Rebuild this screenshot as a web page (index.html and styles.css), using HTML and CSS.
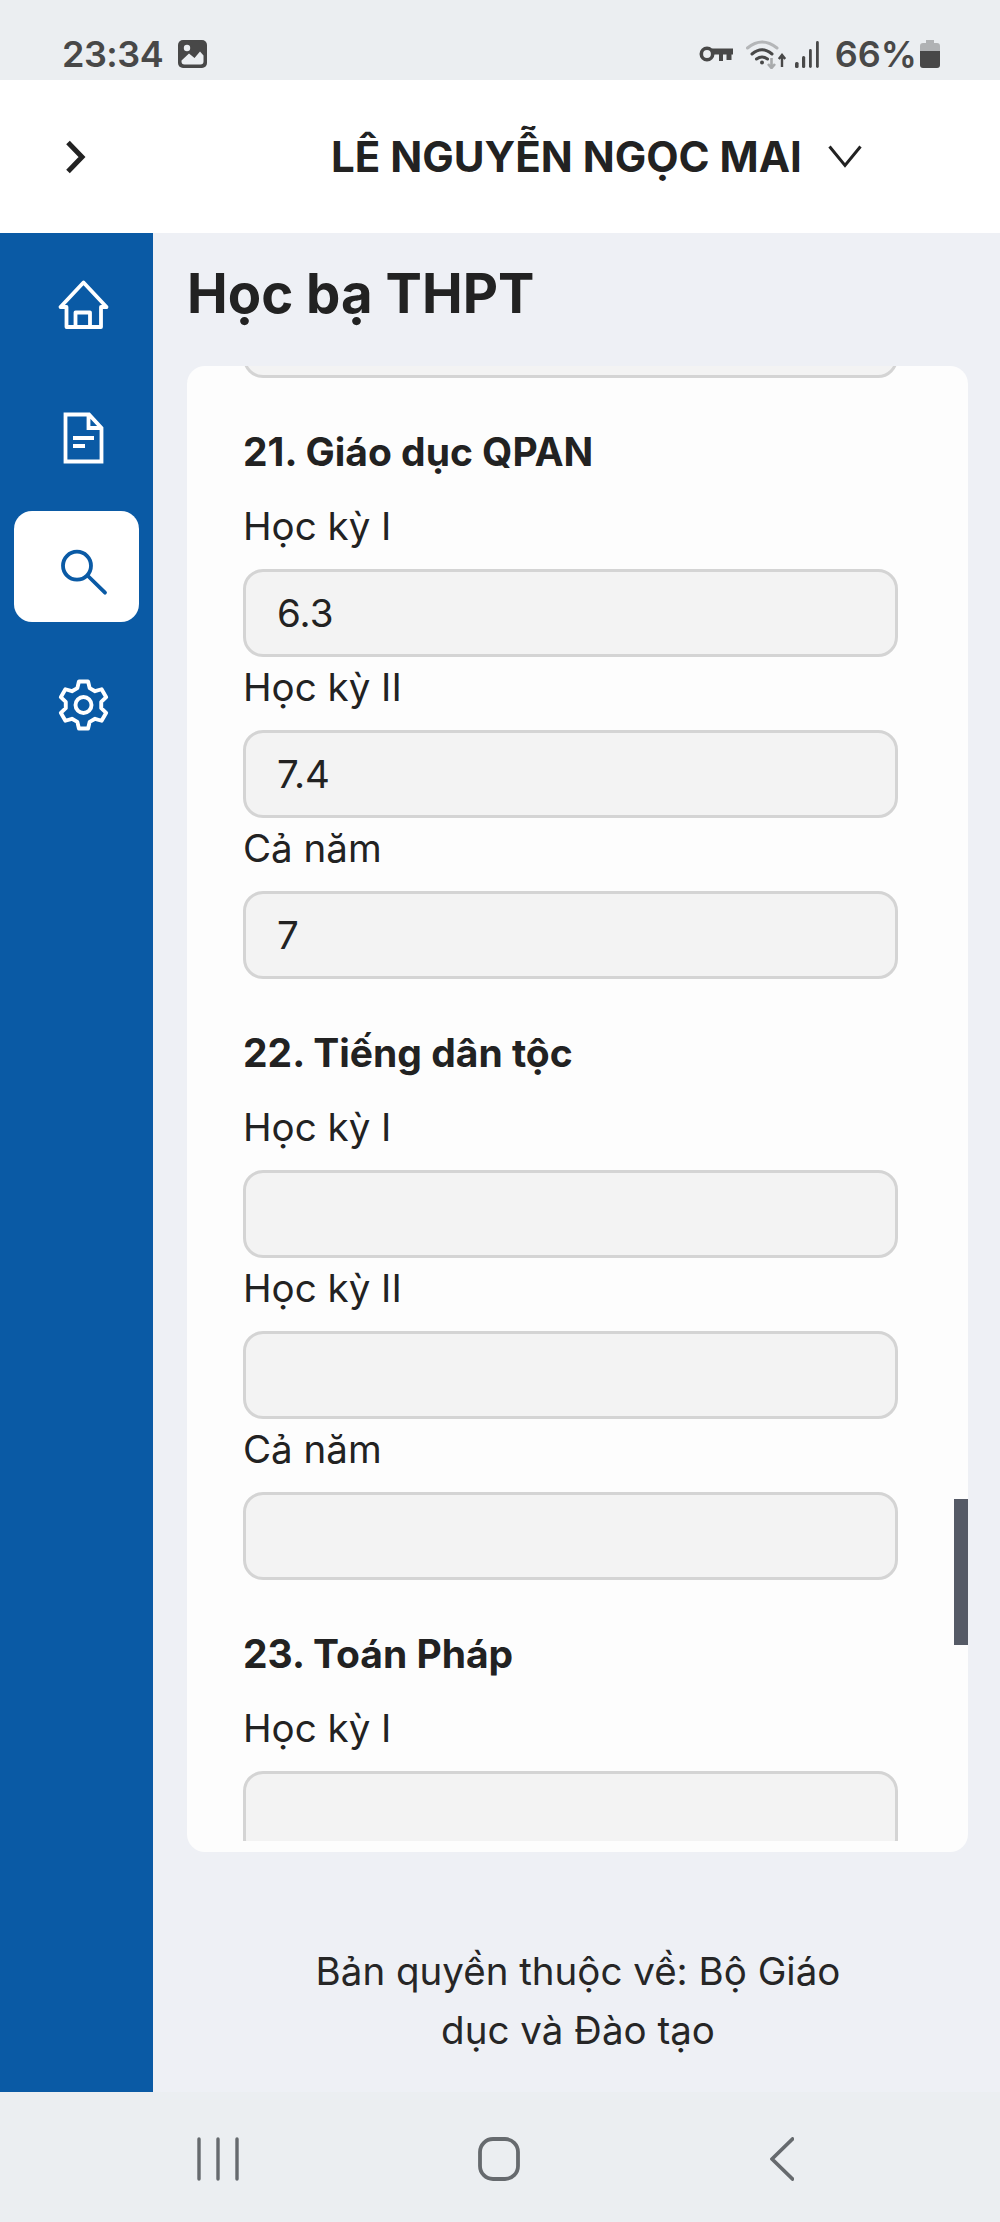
FILE: index.html
```html
<!DOCTYPE html>
<html lang="vi">
<head>
<meta charset="utf-8">
<title>Học bạ THPT</title>
<link rel="stylesheet" href="styles.css">
</head>
<body>
<div class="phone">
  <div class="statusbar">
    <div class="status-left">
      <span class="clock">23:34</span>
      <svg class="ic-image" viewBox="0 0 29 28"><rect width="29" height="28" rx="5" fill="#484848"/><circle cx="9" cy="8" r="3.2" fill="#ebeef1"/><path d="M3.5 20.5 L11 13.5 L16.5 18 L22 11.5 L25.5 15.5 V21.5 Q25.5 24.5 22.5 24.5 H6.5 Q3.5 24.5 3.5 21.5Z" fill="#ebeef1"/></svg>
    </div>
    <div class="status-right">
      <svg class="ic-key" viewBox="0 0 34 16"><circle cx="8" cy="8" r="5.7" fill="none" stroke="#484848" stroke-width="3.6"/><path d="M13 2.5H34V8.5H13ZM20 8H24V15H20ZM27.500 8H32.500V14H27.500Z" fill="#484848"/></svg>
      <svg class="ic-wifi" viewBox="0 0 40 30"><g fill="none" stroke-width="3" stroke-linecap="round"><path d="M1.500 9 Q16 -3 31 9" stroke="#b4b6b8"/><path d="M6 15 Q16 6.500 26 15" stroke="#484848"/><path d="M10.500 20 Q16 16 21.500 20" stroke="#484848"/></g><circle cx="16" cy="23.500" r="2" fill="#484848"/><path d="M25.500 19V28M22 25L25.500 29L29 25" fill="none" stroke="#a8aaac" stroke-width="2.600"/><path d="M36 28V17M32.800 20L36 16L39.200 20" fill="none" stroke="#484848" stroke-width="2.400"/></svg>
      <svg class="ic-signal" viewBox="0 0 25 27"><g fill="#484848"><rect x="0" y="21" width="3.600" height="6" rx="1.500"/><rect x="7" y="15" width="3.200" height="12" rx="1.500"/><rect x="14" y="8" width="2.800" height="19" rx="1.400"/><rect x="21" y="0" width="2.800" height="27" rx="1.400"/></g></svg>
      <span class="percent">66%</span>
      <svg class="ic-battery" viewBox="0 0 20 28"><path d="M6 0H14V3H17Q20 3 20 6V12H0V6Q0 3 3 3H6Z" fill="#b0b2b4"/><path d="M0 11H20V25Q20 28 17 28H3Q0 28 0 25Z" fill="#484848"/></svg>
    </div>
  </div>

  <header class="topbar">
    <svg class="ic-toggle" viewBox="0 0 24 34"><path d="M4 2.500 L18 17 L4 31.500" fill="none" stroke="#222" stroke-width="5"/></svg>
    <span class="username">LÊ NGUYỄN NGỌC MAI</span>
    <svg class="ic-caret" viewBox="0 0 34 23"><path d="M1.500 1.500 L17 20.500 L32.500 1.500" fill="none" stroke="#222" stroke-width="3"/></svg>
  </header>

  <div class="main">
    <nav class="sidebar">
      <a class="nav-item">
        <svg class="nav-ic" viewBox="0 0 60 60"><path d="M13.500 36H7.500L30.500 11.500L53.500 36H48V56H13.500ZM22.500 56V41.500H37V56" fill="none" stroke="#fff" stroke-width="3.800" stroke-linejoin="round"/></svg>
      </a>
      <a class="nav-item">
        <svg class="nav-ic" viewBox="0 0 60 60"><path d="M12.500 10.500H36L48.500 24V57.500H12.500ZM35.500 10.500V24H48.500M20 34H41M20 42H32" fill="none" stroke="#fff" stroke-width="3.800"/></svg>
      </a>
      <a class="nav-item is-active">
        <svg class="nav-ic" viewBox="0 0 60 60"><circle cx="24" cy="28.700" r="14" fill="none" stroke="#0a5aa5" stroke-width="3.800"/><path d="M35 39L52 55.700" fill="none" stroke="#0a5aa5" stroke-width="3.800" stroke-linecap="round"/></svg>
      </a>
      <a class="nav-item">
        <svg class="nav-ic" viewBox="0 0 60 60"><g transform="translate(30.500 35)" fill="none" stroke="#fff" stroke-width="3.900" stroke-linejoin="round"><path d="M-6.160 -16.900L-4.580 -23.560L4.580 -23.560L6.160 -16.900L11.570 -13.790L18.110 -15.750L22.690 -7.810L17.730 -3.130V3.130L22.690 7.810L18.110 15.750L11.570 13.790L6.160 16.900L4.580 23.560H-4.580L-6.160 16.900L-11.570 13.790L-18.110 15.750L-22.690 7.810L-17.730 3.130V-3.130L-22.690 -7.810L-18.110 -15.750L-11.570 -13.790Z"/><circle r="8"/></g></svg>
      </a>
    </nav>

    <main class="content">
      <h1 class="page-title">Học bạ THPT</h1>
      <div class="card">
        <div class="scroll">
          <input class="field field-stub" readonly>

          <section class="subject">
            <h2 class="subject-title">21. Giáo dục QPAN</h2>
            <label class="field-label">Học kỳ I</label>
            <input class="field" value="6.3" readonly>
            <label class="field-label">Học kỳ II</label>
            <input class="field" value="7.4" readonly>
            <label class="field-label">Cả năm</label>
            <input class="field" value="7" readonly>
          </section>

          <section class="subject">
            <h2 class="subject-title">22. Tiếng dân tộc</h2>
            <label class="field-label">Học kỳ I</label>
            <input class="field" readonly>
            <label class="field-label">Học kỳ II</label>
            <input class="field" readonly>
            <label class="field-label">Cả năm</label>
            <input class="field" readonly>
          </section>

          <section class="subject">
            <h2 class="subject-title">23. Toán Pháp</h2>
            <label class="field-label">Học kỳ I</label>
            <input class="field" readonly>
          </section>
        </div>
        <div class="scroll-thumb"></div>
      </div>
      <footer class="copyright">Bản quyền thuộc về: Bộ Giáo dục và Đào tạo</footer>
    </main>
  </div>

  <div class="navbar">
    <svg class="ic-recents" viewBox="0 0 42 44"><path d="M2 2V42M21 2V42M40 2V42" fill="none" stroke="#666a6e" stroke-width="3.400" stroke-linecap="round"/></svg>
    <svg class="ic-home" viewBox="0 0 42 44"><rect x="2" y="2" width="38" height="40" rx="13" fill="none" stroke="#666a6e" stroke-width="3.800"/></svg>
    <svg class="ic-back" viewBox="0 0 24 44"><path d="M22.500 2L2 22L22.500 42" fill="none" stroke="#666a6e" stroke-width="3.800" stroke-linecap="round" stroke-linejoin="round"/></svg>
  </div>
</div>
</body>
</html>
```

FILE: styles.css
```css
* { box-sizing: border-box; }
html, body { margin: 0; padding: 0; }
body {
  font-family: Inter, "Liberation Sans", Arial, sans-serif;
  color: #222;
  background: #eef0f5;
}
.phone {
  width: 1000px;
  height: 2222px;
  display: flex;
  flex-direction: column;
  overflow: hidden;
}

/* status bar */
.statusbar {
  height: 80px;
  flex: none;
  background: #ebeef1;
  display: flex;
  justify-content: space-between;
  align-items: center;
  padding: 28px 60px 0 62px;
  color: #484848;
  font-family: Inter, "Liberation Sans", sans-serif;
  font-weight: 600;
  font-size: 36px;
}
.status-left, .status-right { display: flex; align-items: center; }
.status-left { gap: 15px; }
.clock { letter-spacing: -0.5px; }
.ic-image { width: 29px; height: 28px; }
.ic-key { width: 34px; height: 16px; margin-right: 13px; }
.ic-wifi { width: 40px; height: 30px; margin-right: 9px; }
.ic-signal { width: 25px; height: 27px; margin-right: 15px; }
.ic-battery { width: 20px; height: 28px; margin-left: 3px; }

/* top bar */
.topbar {
  height: 153px;
  flex: none;
  background: #fff;
  display: flex;
  align-items: center;
  padding-left: 64px;
}
.ic-toggle { width: 24px; height: 34px; }
.username {
  width: 472px;
  margin-left: 243px;
  font-size: 42px;
  font-weight: 700;
  white-space: nowrap;
  color: #222;
}
.ic-caret { width: 34px; height: 23px; margin-left: 25px; }

/* main */
.main { flex: 1; display: flex; min-height: 0; }
.sidebar {
  width: 153px;
  flex: none;
  background: #0a5aa5;
  padding: 12px 14px 0;
  display: flex;
  flex-direction: column;
  gap: 22px;
}
.nav-item {
  height: 111px;
  border-radius: 18px;
  padding-left: 39px;
  display: flex;
  align-items: center;
}
.nav-item.is-active { background: #fff; }
.nav-ic { width: 60px; height: 60px; overflow: visible; }

.content { flex: 1; min-width: 0; background: #eef0f5; padding: 28px 0 0 34px; }
.page-title {
  margin: 0 0 41px 0;
  font-size: 54.500px;
  line-height: 64px;
  font-weight: 700;
  color: #222;
}
.card {
  position: relative;
  width: 781px;
  height: 1486px;
  background: #fdfdfd;
  border-radius: 18px;
  padding-bottom: 11px;
}
.scroll {
  height: 100%;
  overflow: hidden;
  padding: 0 70px 0 56px;
  border-radius: 18px 18px 0 0;
}
.scroll-thumb {
  position: absolute;
  right: 0;
  top: 1133px;
  width: 14px;
  height: 146px;
  background: #555a66;
}
.field {
  display: block;
  width: 100%;
  height: 88px;
  padding: 0 31px;
  margin: 0;
  background: #f3f3f3;
  border: 3px solid #d4d4d4;
  border-radius: 20px;
  font-family: Inter, "Liberation Sans", Arial, sans-serif;
  font-size: 38.500px;
  color: #222;
  outline: none;
}
.field-stub { margin-top: -76px; }
.subject { padding-top: 52px; }
.subject-title {
  margin: 0 0 30px;
  font-size: 39px;
  line-height: 44px;
  font-weight: 700;
  color: #222;
}
.field-label {
  display: block;
  margin: 8px 0 21px;
  font-size: 38.500px;
  line-height: 44px;
  color: #222;
}

.copyright {
  margin-top: 90px;
  padding: 0 132px 0 101px;
  font-size: 38.500px;
  line-height: 59px;
  text-align: center;
  color: #262626;
}

/* android nav */
.navbar {
  height: 130px;
  flex: none;
  background: #ebeef1;
  position: relative;
  display: flex;
  align-items: flex-start;
  padding: 45px 0 0 197px;
}
.ic-recents { width: 42px; height: 44px; }
.ic-home { width: 42px; height: 44px; margin-left: 239px; }
.ic-back { width: 24px; height: 44px; margin-left: 250px; }
```
